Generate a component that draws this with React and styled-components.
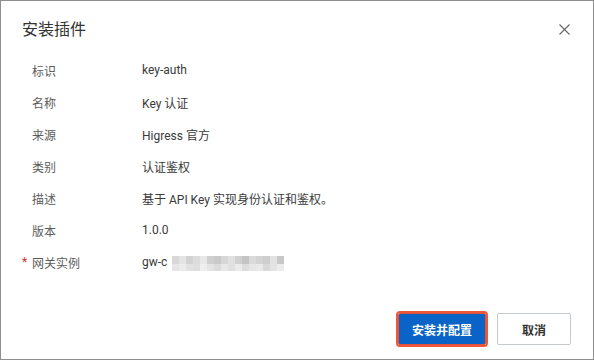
import React from 'react';
import styled, { createGlobalStyle } from 'styled-components';

const GlobalStyle = createGlobalStyle`
    html, body {
        margin: 0;
        padding: 0;
        background: #fff;
    }
    body {
        font-family: Roboto, "Noto Sans CJK SC", sans-serif;
    }
`;

const rows = [
    { label: '标识', value: 'key-auth' },
    { label: '名称', value: 'Key 认证' },
    { label: '来源', value: 'Higress 官方' },
    { label: '类别', value: '认证鉴权' },
    { label: '描述', value: '基于 API Key 实现身份认证和鉴权。' },
    { label: '版本', value: '1.0.0' },
];

const mosaic = [
    ['#d8d8d8', '#e4e4e4', '#d2d2d2', '#dcdcdc', '#e8e8e8', '#cfcfcf', '#c9c9c9', '#d6d6d6', '#e0e0e0', '#d0d0d0', '#c4c4c4', '#dadada', '#d3d3d3', '#cdcdcd', '#e2e2e2', '#c8c8c8'],
    ['#e6e6e6', '#ececec', '#e2e2e2', '#dedede', '#eeeeee', '#e4e4e4', '#dcdcdc', '#e8e8e8', '#e0e0e0', '#ebebeb', '#dddddd', '#e6e6e6', '#e9e9e9', '#d9d9d9', '#e3e3e3', '#ececec'],
];

export default () => (
    <>
        <GlobalStyle />
        <Dialog>
            <Header>
                <Title>安装插件</Title>
                <Close aria-label="close">
                    <svg width="11" height="11" viewBox="0 0 11 11">
                        <path d="M0.5 0.5 L10.5 10.5 M10.5 0.5 L0.5 10.5" stroke="#666" strokeWidth="1.1" fill="none" />
                    </svg>
                </Close>
            </Header>
            <Body>
                {rows.map((r) => (
                    <Row key={r.label}>
                        <Label>{r.label}</Label>
                        <Value>{r.value}</Value>
                    </Row>
                ))}
                <Row>
                    <Label>
                        <Required>*</Required>网关实例
                    </Label>
                    <Value>
                        gw-c
                        <Mosaic>
                            {mosaic.flat().map((c, i) => (
                                <Pixel key={i} $color={c} />
                            ))}
                        </Mosaic>
                    </Value>
                </Row>
            </Body>
            <Footer>
                <Button $primary>安装并配置</Button>
                <Button>取消</Button>
            </Footer>
        </Dialog>
    </>
);

const Dialog = styled.div`
    width: 594px;
    height: 360px;
    box-sizing: border-box;
    border: 1px solid #8e8e8e;
    background: #fff;
    display: flex;
    flex-direction: column;
`;

const Header = styled.div`
    display: flex;
    align-items: center;
    justify-content: space-between;
    padding: 19px 23px 0 21px;
    height: 20px;
`;

const Title = styled.div`
    font-size: 16px;
    line-height: 20px;
    color: #333;
`;

const Close = styled.div`
    width: 11px;
    height: 11px;
    display: flex;
    margin-top: -2px;
`;

const Body = styled.div`
    padding: 14px 0 0 31px;
    display: flex;
    flex-direction: column;
`;

const Row = styled.div`
    display: flex;
    align-items: center;
    height: 32px;
    font-size: 12px;
`;

const Label = styled.div`
    width: 110px;
    color: #5c5c5c;
    display: flex;
    align-items: center;
`;

const Required = styled.span`
    color: #d93026;
    width: 10px;
    margin-left: -10px;
    font-size: 12px;
`;

const Value = styled.div`
    color: #3a3a3a;
    display: flex;
    align-items: center;
`;

const Mosaic = styled.div`
    display: grid;
    grid-template-columns: repeat(16, 7px);
    grid-template-rows: 8px 7px;
    margin-left: 5px;
    margin-top: 2px;
`;

const Pixel = styled.span`
    background: ${(p) => p.$color};
`;

const Footer = styled.div`
    margin-top: auto;
    display: flex;
    justify-content: flex-end;
    gap: 11px;
    padding: 0 22px 14px 0;
`;

const Button = styled.button`
    height: 32px;
    box-sizing: border-box;
    padding: 0;
    width: ${(p) => (p.$primary ? '88px' : '74px')};
    font-family: Roboto, "Noto Sans CJK SC", sans-serif;
    font-size: 12px;
    font-weight: 700;
    border-radius: 2px;
    border: 1px solid ${(p) => (p.$primary ? '#e0503a' : '#c4c9cf')};
    background: ${(p) => (p.$primary ? '#0a64c8' : '#fff')};
    color: ${(p) => (p.$primary ? '#fff' : '#333')};
    outline: ${(p) => (p.$primary ? '2px solid #f0573a' : 'none')};
    cursor: pointer;
`;
